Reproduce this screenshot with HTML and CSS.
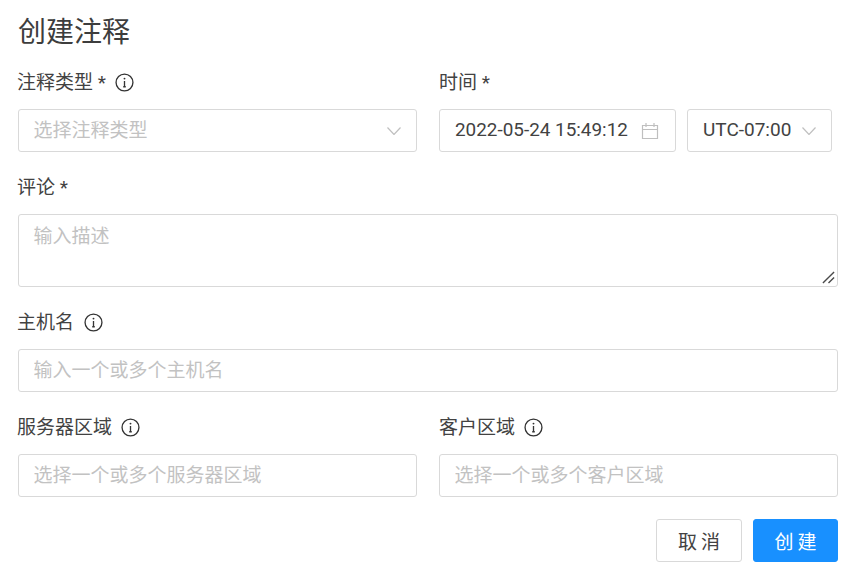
FILE: index.html
```html
<!DOCTYPE html>
<html lang="zh-CN">
<head>
    <meta charset="UTF-8">
    <title>创建注释</title>
    <link rel="stylesheet" href="styles.css">
</head>
<body>
    <form class="dialog">
        <h1>创建注释</h1>

        <div class="row">
            <div class="field">
                <label>注释类型 *
                    <svg class="info" viewBox="0 0 18 18"><circle cx="9" cy="9" r="8"/><path d="M9 7.6v5.2M7.8 13h2.4"/><circle class="dot" cx="9" cy="5.3" r=".9"/></svg>
                </label>
                <div class="select placeholder">
                    <span>选择注释类型</span>
                    <svg class="arrow" viewBox="0 0 14 8"><path d="M.5.5 7 7.5 13.5.5"/></svg>
                </div>
            </div>
            <div class="field">
                <label>时间 *</label>
                <div class="time-row">
                    <div class="select date">
                        <span>2022-05-24 15:49:12</span>
                        <svg class="calendar" viewBox="0 0 18 18"><path d="M1.5 3.5h15v13h-15zM1.5 7.5h15M5 1v4M13 1v4"/></svg>
                    </div>
                    <div class="select zone">
                        <span>UTC-07:00</span>
                        <svg class="arrow" viewBox="0 0 14 8"><path d="M.5.5 7 7.5 13.5.5"/></svg>
                    </div>
                </div>
            </div>
        </div>

        <div class="field">
            <label>评论 *</label>
            <div class="textarea-wrap">
                <textarea placeholder="输入描述"></textarea>
                <svg class="grip" viewBox="0 0 14 14"><path d="M1 13 13 1M7 13l6-6"/></svg>
            </div>
        </div>

        <div class="field">
            <label class="host-label">主机名
                <svg class="info" viewBox="0 0 18 18"><circle cx="9" cy="9" r="8"/><path d="M9 7.6v5.2M7.8 13h2.4"/><circle class="dot" cx="9" cy="5.3" r=".9"/></svg>
            </label>
            <input type="text" placeholder="输入一个或多个主机名">
        </div>

        <div class="row">
            <div class="field">
                <label>服务器区域
                    <svg class="info" viewBox="0 0 18 18"><circle cx="9" cy="9" r="8"/><path d="M9 7.6v5.2M7.8 13h2.4"/><circle class="dot" cx="9" cy="5.3" r=".9"/></svg>
                </label>
                <input type="text" placeholder="选择一个或多个服务器区域">
            </div>
            <div class="field">
                <label>客户区域
                    <svg class="info" viewBox="0 0 18 18"><circle cx="9" cy="9" r="8"/><path d="M9 7.6v5.2M7.8 13h2.4"/><circle class="dot" cx="9" cy="5.3" r=".9"/></svg>
                </label>
                <input type="text" placeholder="选择一个或多个客户区域">
            </div>
        </div>

        <div class="actions">
            <button type="button" class="btn">取消</button>
            <button type="button" class="btn primary">创建</button>
        </div>
    </form>
</body>
</html>
```

FILE: styles.css
```css
html, body {
    margin: 0;
    height: 572px;
    overflow: hidden;
    background: #fff;
}
body {
    font-family: Roboto, "Noto Sans CJK SC", sans-serif;
    font-size: 19px;
    color: #424242;
}
.dialog {
    width: 820px;
    padding: 11px 14px 0 18px;
}
h1 {
    margin: 0 0 15px 0;
    height: 43px;
    line-height: 43px;
    font-size: 28px;
    font-weight: 400;
    color: #3d3d3d;
}
.row {
    display: flex;
    gap: 22px;
}
.row .field {
    flex: 1 1 0;
    min-width: 0;
}
.row .field + .field label {
    margin-left: 0;
}
.field {
    margin-bottom: 22px;
}
label {
    display: flex;
    align-items: center;
    gap: 9px;
    height: 27px;
    line-height: 27px;
    margin: 0 0 13px -1px;
    white-space: nowrap;
}
.host-label {
    gap: 10px;
}
.info {
    width: 19px;
    height: 19px;
    fill: none;
    stroke: #333;
    stroke-width: 1.25;
}
.info .dot {
    fill: #333;
    stroke: none;
}
input, textarea, .select {
    display: block;
    box-sizing: border-box;
    width: 100%;
    height: 43px;
    margin: 0;
    padding: 0 14.5px;
    border: 1px solid #d9d9d9;
    border-radius: 3px;
    background: #fff;
    font: inherit;
    color: inherit;
    outline: none;
}
input::placeholder, textarea::placeholder, .placeholder {
    color: #c2c2c2;
    opacity: 1;
}
.textarea-wrap {
    position: relative;
}
textarea {
    height: 73px;
    padding: 8px 14.5px;
    line-height: 27px;
    resize: none;
}
.grip {
    position: absolute;
    right: 3px;
    bottom: 3px;
    width: 13px;
    height: 13px;
    fill: none;
    stroke: #4a4a4a;
    stroke-width: 1.5;
}
.select {
    display: flex;
    align-items: center;
    justify-content: space-between;
}
.select span {
    margin-top: -2px;
}
.placeholder span {
    margin-top: -4px;
}
.placeholder .arrow {
    margin-right: 1px;
}
.time-row {
    display: flex;
    gap: 11px;
    width: 393px;
}
.date {
    width: 237px;
    flex: none;
    padding: 0 16px 0 15px;
    font-size: 18.9px;
}
.zone {
    width: 145px;
    flex: none;
    padding: 0 15px;
}
.arrow {
    width: 14px;
    height: 8px;
    fill: none;
    stroke: #bfbfbf;
    stroke-width: 1.2;
}
.calendar {
    width: 18px;
    height: 18px;
    fill: none;
    stroke: #bfbfbf;
    stroke-width: 1.2;
}
.actions {
    display: flex;
    justify-content: flex-end;
    gap: 11px;
}
.btn {
    width: 86px;
    height: 43px;
    padding: 0 0 0 4px;
    border: 1px solid #d9d9d9;
    border-radius: 3px;
    background: #fff;
    font: inherit;
    letter-spacing: 4px;
    color: #424242;
    cursor: pointer;
}
.primary {
    width: 85px;
    border-color: #1890ff;
    background: #1890ff;
    color: #fff;
}
```
